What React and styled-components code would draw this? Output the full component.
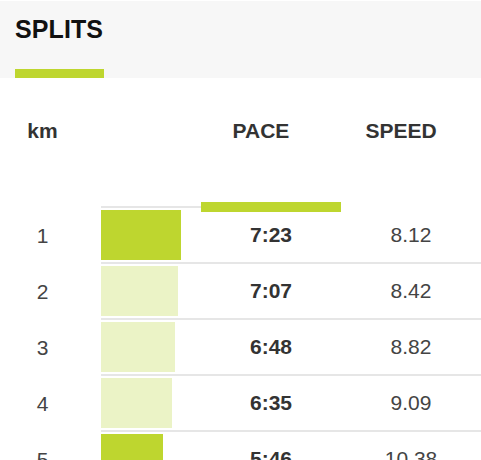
import React from 'react';
import styled, { createGlobalStyle } from 'styled-components';

const GlobalStyle = createGlobalStyle`
  body {
    margin: 0;
    background: #ffffff;
    font-family: "Liberation Sans", Arial, sans-serif;
  }
`;

const GREEN = '#bed62f';
const GREEN_LIGHT = '#ebf3c6';

const splits = [
  { km: 1, pace: '7:23', speed: '8.12', highlight: true },
  { km: 2, pace: '7:07', speed: '8.42' },
  { km: 3, pace: '6:48', speed: '8.82' },
  { km: 4, pace: '6:35', speed: '9.09' },
  { km: 5, pace: '5:46', speed: '10.38', highlight: true },
];

const paceSeconds = (pace) => {
  const [m, s] = pace.split(':').map(Number);
  return m * 60 + s;
};

const Page = styled.div`
  width: 481px;
  height: 460px;
  overflow: hidden;
  border-top: 1px solid #ffffff;
`;

const Header = styled.div`
  height: 77px;
  background: #f7f7f7;
  padding: 13px 0 0 15px;
  box-sizing: border-box;
  display: flex;
  flex-direction: column;
  justify-content: space-between;
`;

const Title = styled.h2`
  margin: 0;
  font-size: 25px;
  line-height: 30px;
  font-weight: 700;
  color: #111111;
  letter-spacing: 0.1px;
`;

const TitleBar = styled.div`
  width: 89px;
  height: 9px;
  background: ${GREEN};
  margin-bottom: 0;
`;

const HeadRow = styled.div`
  height: 130px;
  display: grid;
  grid-template-columns: 101px 100px 140px 140px;
  grid-template-rows: 1fr auto;
`;

const HeadLabel = styled.div`
  padding-top: 41px;
  padding-right: ${(p) => (p.$first ? '16px' : '20px')};
  font-size: 21px;
  line-height: 24px;
  font-weight: 700;
  color: #333333;
  text-align: center;
  grid-column: ${(p) => p.$col};
  grid-row: 1;
`;

const TopRule = styled.div`
  grid-column: 2;
  grid-row: 2;
  align-self: end;
  height: 2px;
  background: #e6e6e6;
`;

const SortMarker = styled.div`
  grid-column: 3;
  grid-row: 2;
  align-self: end;
  height: 10px;
  margin-bottom: -4px;
  background: ${GREEN};
`;

const Row = styled.div`
  display: flex;
  height: 56px;
`;

const KmCell = styled.div`
  width: 101px;
  padding-right: 16px;
  box-sizing: border-box;
  display: flex;
  align-items: center;
  justify-content: center;
  font-size: 21px;
  color: #444444;
`;

const Track = styled.div`
  flex: 1;
  display: grid;
  grid-template-columns: 100px 140px 140px;
  align-items: center;
  padding: 2px 0;
  border-bottom: 2px solid #e6e6e6;
`;

const Bar = styled.div`
  height: 50px;
  background: ${(p) => (p.$highlight ? GREEN : GREEN_LIGHT)};
`;

const Pace = styled.div`
  text-align: center;
  font-size: 21px;
  font-weight: 700;
  color: #333333;
`;

const Speed = styled.div`
  text-align: center;
  font-size: 21px;
  color: #444444;
`;

export default function App() {
  return (
    <>
      <GlobalStyle />
      <Page>
        <Header>
          <Title>SPLITS</Title>
          <TitleBar />
        </Header>
        <HeadRow>
          <HeadLabel $col={1} $first>km</HeadLabel>
          <HeadLabel $col={3}>PACE</HeadLabel>
          <HeadLabel $col={4}>SPEED</HeadLabel>
          <TopRule />
          <SortMarker />
        </HeadRow>
        {splits.map((s) => (
          <Row key={s.km}>
            <KmCell>{s.km}</KmCell>
            <Track>
              <div>
                <Bar
                  $highlight={s.highlight}
                  style={{ width: Math.round(paceSeconds(s.pace) * 0.1806) }}
                />
              </div>
              <Pace>{s.pace}</Pace>
              <Speed>{s.speed}</Speed>
            </Track>
          </Row>
        ))}
      </Page>
    </>
  );
}
